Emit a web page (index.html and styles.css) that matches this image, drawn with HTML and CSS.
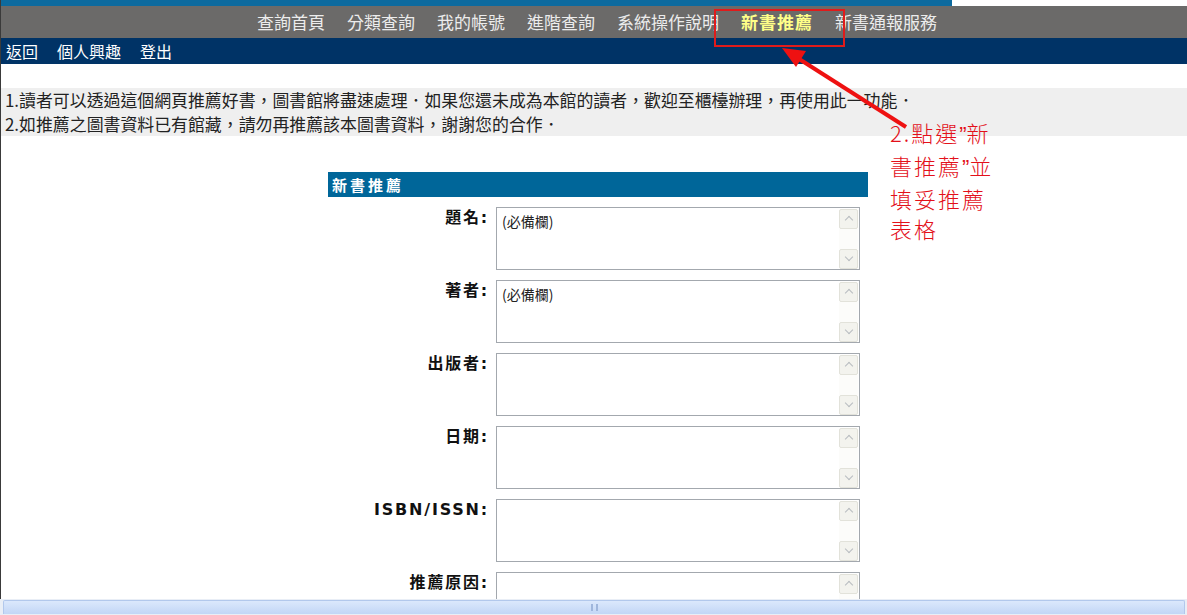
FILE: index.html
```html
<!DOCTYPE html>
<html lang="zh-Hant">
<head>
    <meta charset="UTF-8">
    <meta name="viewport" content="width=device-width, initial-scale=1.0">
    <title>新書推薦</title>
    <link rel="stylesheet" href="styles.css">
</head>
<body>
    <div class="page">
        <!-- Top strip -->
        <div class="top-strip">
            <div class="top-strip-blue"></div>
            <div class="top-strip-white"></div>
        </div>

        <!-- Main navigation -->
        <div class="main-nav">
            <span class="nav-item">查詢首頁</span>
            <span class="nav-item">分類查詢</span>
            <span class="nav-item">我的帳號</span>
            <span class="nav-item">進階查詢</span>
            <span class="nav-item">系統操作說明</span>
            <span class="nav-item active">新書推薦</span>
            <span class="nav-item">新書通報服務</span>
        </div>

        <!-- Sub navigation -->
        <div class="sub-nav">
            <span class="sub-item">返回</span>
            <span class="sub-item">個人興趣</span>
            <span class="sub-item">登出</span>
        </div>

        <!-- Notice -->
        <div class="notice">
            <div>1.讀者可以透過這個網頁推薦好書，圖書館將盡速處理．如果您還未成為本館的讀者，歡迎至櫃檯辦理，再使用此一功能．</div>
            <div>2.如推薦之圖書資料已有館藏，請勿再推薦該本圖書資料，謝謝您的合作．</div>
        </div>

        <!-- Recommend form -->
        <div class="form-box">
            <div class="form-title">新書推薦</div>

            <div class="form-row">
                <div class="form-label">題名:</div>
                <div class="text-box">
                    <div class="text-area">(必備欄)</div>
                    <div class="v-scroll"><span class="sb-btn up"></span><span class="sb-track"></span><span class="sb-btn down"></span></div>
                </div>
            </div>

            <div class="form-row">
                <div class="form-label">著者:</div>
                <div class="text-box">
                    <div class="text-area">(必備欄)</div>
                    <div class="v-scroll"><span class="sb-btn up"></span><span class="sb-track"></span><span class="sb-btn down"></span></div>
                </div>
            </div>

            <div class="form-row">
                <div class="form-label">出版者:</div>
                <div class="text-box">
                    <div class="text-area"></div>
                    <div class="v-scroll"><span class="sb-btn up"></span><span class="sb-track"></span><span class="sb-btn down"></span></div>
                </div>
            </div>

            <div class="form-row">
                <div class="form-label">日期:</div>
                <div class="text-box">
                    <div class="text-area"></div>
                    <div class="v-scroll"><span class="sb-btn up"></span><span class="sb-track"></span><span class="sb-btn down"></span></div>
                </div>
            </div>

            <div class="form-row">
                <div class="form-label">ISBN/ISSN:</div>
                <div class="text-box">
                    <div class="text-area"></div>
                    <div class="v-scroll"><span class="sb-btn up"></span><span class="sb-track"></span><span class="sb-btn down"></span></div>
                </div>
            </div>

            <div class="form-row">
                <div class="form-label">推薦原因:</div>
                <div class="text-box">
                    <div class="text-area"></div>
                    <div class="v-scroll"><span class="sb-btn up"></span><span class="sb-track"></span><span class="sb-btn down"></span></div>
                </div>
            </div>
        </div>

        <!-- Annotation overlay -->
        <div class="mark-box"></div>
        <svg class="mark-arrow" width="140" height="90" viewBox="0 0 140 90">
            <line x1="124" y1="82" x2="14" y2="12" stroke="#ee1111" stroke-width="4"/>
            <polygon points="0,3 24,6 14,22" fill="#ee1111"/>
        </svg>
        <div class="mark-text">
            <div>2.點選<span class="q">”</span>新</div>
            <div>書推薦<span class="q">”</span>並</div>
            <div>填妥推薦</div>
            <div>表格</div>
        </div>
    </div>

    <!-- Horizontal scrollbar -->
    <div class="h-scroll">
        <div class="h-thumb"><span class="grip"></span></div>
    </div>
</body>
</html>
```

FILE: styles.css
```css
body {
    margin: 0;
    height: 100vh;
    display: flex;
    flex-direction: column;
    overflow: hidden;
    font-family: "Noto Sans CJK TC", "Liberation Sans", sans-serif;
    background-color: #ffffff;
    color: #111111;
}

.page {
    flex: 1;
    position: relative;
    overflow: hidden;
    border-left: 1px solid #3a3a3a;
}

/* Top strip */
.top-strip {
    display: flex;
    height: 6px;
}

.top-strip-blue {
    width: 951px;
    background-color: #0d6a9e;
}

.top-strip-white {
    flex: 1;
    background-color: #ffffff;
}

/* Main navigation */
.main-nav {
    height: 32px;
    background-color: #6b6a69;
    display: flex;
    justify-content: center;
    align-items: center;
    gap: 22px;
    padding-left: 6px;
}

.nav-item {
    font-size: 17px;
    line-height: 20px;
    color: #ececec;
}

.nav-item.active {
    color: #ffff88;
    font-weight: bold;
    letter-spacing: 1px;
}

/* Sub navigation */
.sub-nav {
    height: 26px;
    background-color: #003366;
    display: flex;
    align-items: center;
    gap: 19px;
    padding-left: 5px;
}

.sub-item {
    font-size: 16px;
    line-height: 20px;
    color: #ffffff;
}

/* Notice */
.notice {
    margin-top: 24px;
    background-color: #efefef;
    padding: 0 0 0 4px;
    font-size: 16.9px;
    line-height: 24px;
    color: #222222;
}

/* Form */
.form-box {
    width: 540px;
    margin: 36px 0 0 327px;
}

.form-title {
    height: 25px;
    background-color: #006699;
    color: #ffffff;
    font-size: 15px;
    font-weight: bold;
    letter-spacing: 3px;
    line-height: 25px;
    padding-left: 4px;
}

.form-row {
    display: flex;
    margin-top: 10px;
}

.form-label {
    width: 161px;
    padding-right: 7px;
    text-align: right;
    font-family: "DejaVu Sans", "Noto Sans CJK TC", sans-serif;
    font-size: 16px;
    font-weight: bold;
    letter-spacing: 1.8px;
    line-height: 20px;
    padding-top: 1px;
    color: #111111;
}

.text-box {
    width: 362px;
    height: 61px;
    border: 1px solid #a3a8ae;
    display: flex;
    background-color: #ffffff;
}

.text-area {
    flex: 1;
    padding: 4px 5px;
    font-size: 14px;
    line-height: 18px;
    color: #222222;
}

/* Fake textarea scrollbar */
.v-scroll {
    width: 19px;
    margin-right: 1px;
    display: flex;
    flex-direction: column;
    padding-top: 1px;
}

.sb-btn {
    height: 18px;
    border: 1px solid #e2e2da;
    border-radius: 2px;
    background-color: #f3f3ee;
    position: relative;
}

.sb-btn::after {
    content: "";
    position: absolute;
    left: 6px;
    width: 5px;
    height: 5px;
    border-left: 1.5px solid #b8bcc0;
    border-top: 1.5px solid #b8bcc0;
}

.sb-btn.up::after {
    top: 7px;
    transform: rotate(45deg);
}

.sb-btn.down::after {
    top: 4px;
    transform: rotate(225deg);
}

.sb-track {
    flex: 1;
    background-color: #fcfcfa;
}

/* Annotation */
.mark-box {
    position: absolute;
    left: 713px;
    top: 9px;
    width: 127px;
    height: 34px;
    border: 2px solid #e01b1b;
}

.mark-arrow {
    position: absolute;
    left: 781px;
    top: 45px;
}

.mark-text {
    position: absolute;
    left: 889px;
    top: 117px;
    font-size: 22px;
    letter-spacing: 2px;
    line-height: 30px;
    font-weight: 300;
    color: #e3101a;
}

.mark-text .q {
    font-family: "Liberation Sans", sans-serif;
    letter-spacing: 0;
}

/* Horizontal scrollbar */
.h-scroll {
    height: 15px;
    background-color: #e9eef6;
    padding: 1px 2px 0 3px;
}

.h-thumb {
    height: 13px;
    border: 1px solid #b2c8ec;
    border-bottom: none;
    border-radius: 2px 2px 0 0;
    background: linear-gradient(#dbe8fc, #c2d6f6);
    display: flex;
    justify-content: center;
    align-items: center;
}

.grip {
    width: 3px;
    height: 7px;
    border-left: 2px solid #9fb6dc;
    border-right: 2px solid #9fb6dc;
}
```
